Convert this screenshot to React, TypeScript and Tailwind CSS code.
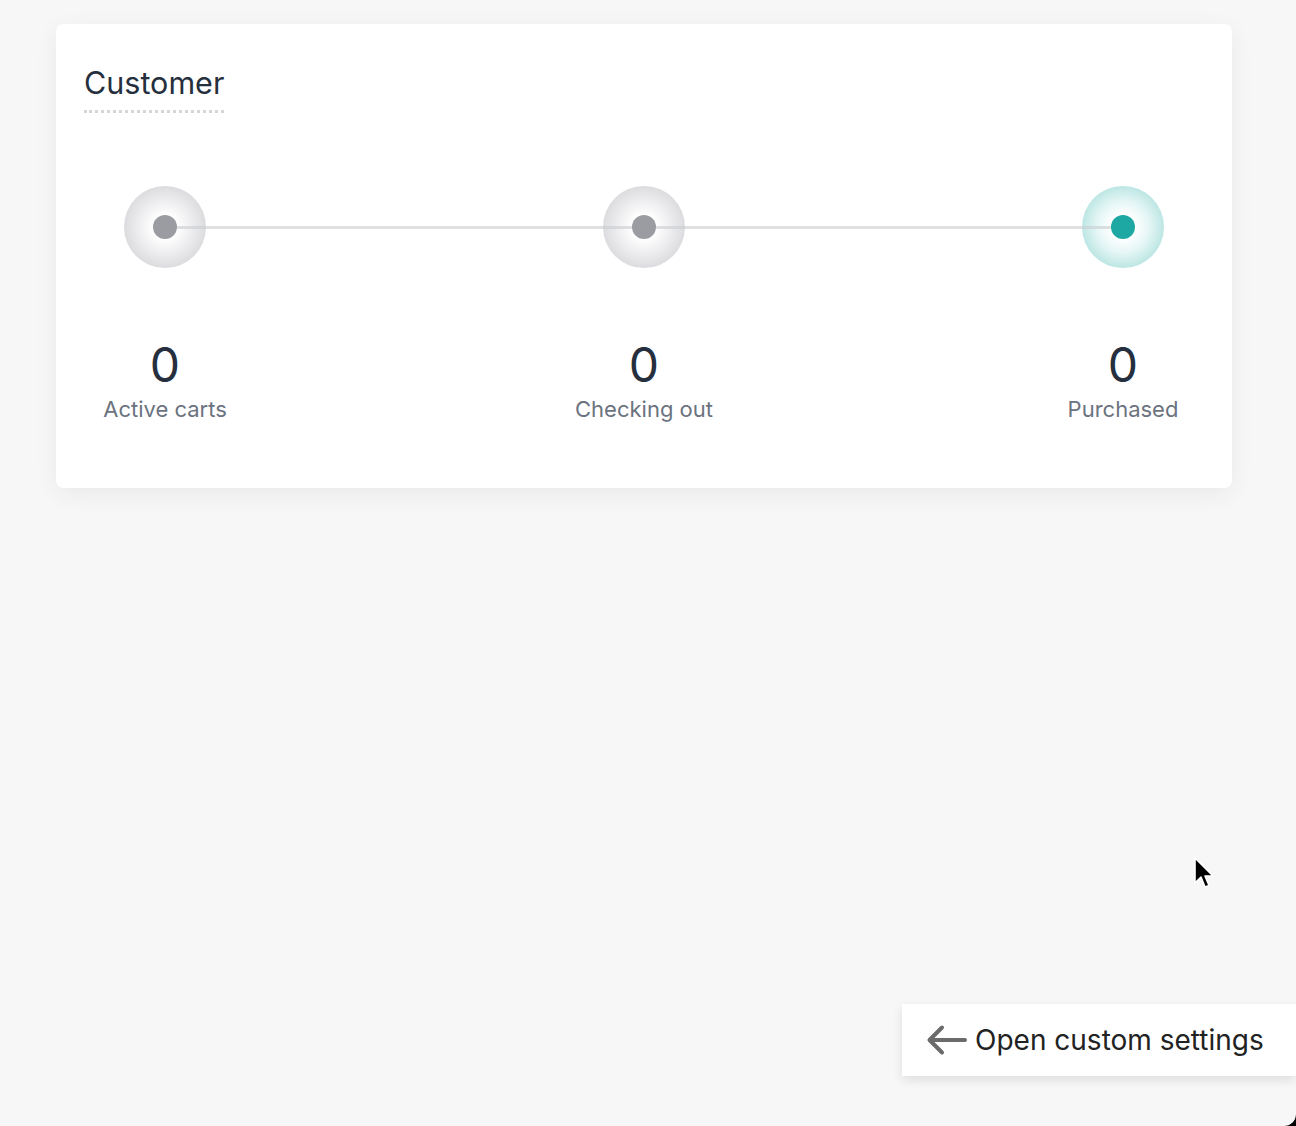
interface StepProps {
    count: number;
    label: string;
    active?: boolean;
}

function Step({ count, label, active }: StepProps) {
    return (
        <div className="flex w-[82px] flex-col items-center">
            <div
                className={
                    active
                        ? "flex h-[82px] w-[82px] items-center justify-center rounded-full bg-[radial-gradient(circle,#ffffff_20%,#e4f6f5_45%,#8fd4d0_100%)]"
                        : "flex h-[82px] w-[82px] items-center justify-center rounded-full bg-[radial-gradient(circle,#ffffff_20%,#eeeef0_45%,#c6c7cb_100%)]"
                }
            >
                <div
                    className={
                        active
                            ? "relative z-10 h-6 w-6 rounded-full bg-[#1ea8a4]"
                            : "relative z-10 h-6 w-6 rounded-full bg-[#9a9ca1]"
                    }
                />
            </div>
            <p className="mt-[73px] text-[48px] leading-none text-[#252f3d]">
                {count}
            </p>
            <p className="mt-[6px] whitespace-nowrap text-[22px] leading-7 text-[#6b7380]">
                {label}
            </p>
        </div>
    );
}

export default function App() {
    return (
        <div
            className="relative h-[1126px] w-full overflow-hidden bg-[#f7f7f7]"
            style={{ fontFamily: 'Inter, "Noto Sans", sans-serif' }}
        >
            <div className="pl-14 pt-6">
                <section className="w-[1176px] rounded-lg bg-white px-7 pb-[65px] pt-[40px] shadow-[0_6px_24px_rgba(0,0,0,0.06)]">
                    <h2 className="inline-block border-b-[3px] border-dotted border-[#d3d5d9] pb-[8px] text-[30.5px] leading-[38px] text-[#252f3d]">
                        Customer
                    </h2>

                    {/* steps */}
                    <div className="relative mx-10 mt-[73px] flex justify-between">
                        <div className="absolute left-[41px] right-[41px] top-[40px] h-[3px] bg-[#c9cbcf]/60" />
                        <Step count={0} label="Active carts" />
                        <Step count={0} label="Checking out" />
                        <Step count={0} label="Purchased" active />
                    </div>
                </section>
            </div>

            <button className="absolute right-0 top-[1004px] flex h-[72px] w-[394px] items-center gap-[8px] bg-white pl-6 text-[28px] text-[#222222] shadow-[0_4px_10px_rgba(0,0,0,0.1)]">
                <svg width="41" height="32" viewBox="0 0 41 32" fill="none">
                    <path
                        d="M39 16 H4 M16 3.5 L3.5 16 L16 28.5"
                        stroke="#6b6b6b"
                        strokeWidth="4"
                        strokeLinecap="round"
                        strokeLinejoin="round"
                    />
                </svg>
                <span>Open custom settings</span>
            </button>

            {/* cursor */}
            <svg
                className="absolute left-[1193px] top-[856px]"
                width="22"
                height="36"
                viewBox="0 0 22 36"
            >
                <path
                    d="M2 2 L2 27 L8 21 L12 31 L16 29.5 L12 20 L20 20 Z"
                    fill="#000"
                    stroke="#fff"
                    strokeWidth="1.6"
                    strokeLinejoin="round"
                />
            </svg>

            {/* window corner */}
            <div className="absolute bottom-0 right-0 h-3 w-3 bg-black">
                <div className="h-3 w-3 rounded-br-[12px] bg-[#f7f7f7]" />
            </div>
        </div>
    );
}
